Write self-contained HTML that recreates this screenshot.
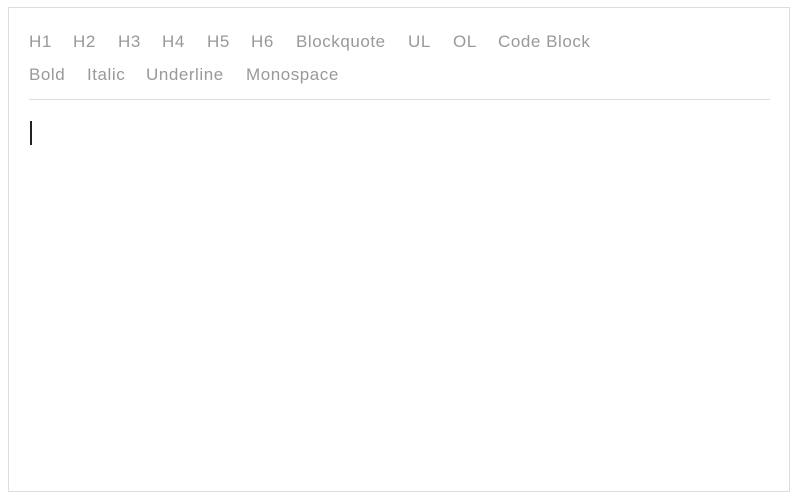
<!DOCTYPE html>
<html><head><meta charset="utf-8"><style>
html,body{margin:0;padding:0;background:#fff;width:800px;height:501px;overflow:hidden;font-family:"Liberation Sans",Arial,sans-serif}
.box{position:absolute;left:8px;top:7px;width:782px;height:485px;border:1px solid #ddd;box-sizing:border-box}
.b{position:absolute;font-size:17px;line-height:17px;color:#999;white-space:nowrap;letter-spacing:0.55px}
.hr{position:absolute;left:29px;top:99px;width:741px;height:1px;background:#ddd}
.cur{position:absolute;left:30px;top:121px;width:1.5px;height:24px;background:#222}
</style></head><body>
<div class="box"></div>
<span class="b" style="left:29px;top:33px">H1</span>
<span class="b" style="left:73px;top:33px">H2</span>
<span class="b" style="left:118px;top:33px">H3</span>
<span class="b" style="left:162px;top:33px">H4</span>
<span class="b" style="left:207px;top:33px">H5</span>
<span class="b" style="left:251px;top:33px">H6</span>
<span class="b" style="left:296px;top:33px">Blockquote</span>
<span class="b" style="left:408px;top:33px">UL</span>
<span class="b" style="left:453px;top:33px">OL</span>
<span class="b" style="left:498px;top:33px">Code Block</span>
<span class="b" style="left:29px;top:66px">Bold</span>
<span class="b" style="left:87px;top:66px">Italic</span>
<span class="b" style="left:146px;top:66px">Underline</span>
<span class="b" style="left:246px;top:66px">Monospace</span>
<div class="hr"></div>
<div class="cur"></div>
</body></html>
